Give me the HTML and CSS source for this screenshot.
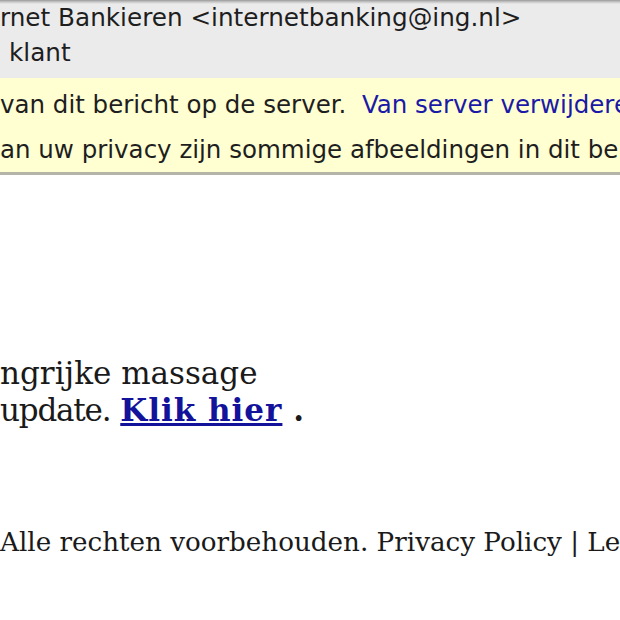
FILE: index.html
```html
<!DOCTYPE html>
<html>
<head>
<meta charset="utf-8">
<link rel="stylesheet" href="styles.css">
</head>
<body>
<div class="window">
  <header class="headers">
    <div class="hline from">rnet Bankieren &lt;internetbanking@ing.nl&gt;</div>
    <div class="hline subject">klant</div>
  </header>
  <section class="notice">
    <div class="nline">van dit bericht op de server.&nbsp; <a class="nlink" href="#">Van server verwijderen</a></div>
    <div class="nline">an uw privacy zijn sommige afbeeldingen in dit bericht geblokkeerd.</div>
  </section>
  <main class="content">
    <p class="msg">ngrijke massage<br><span class="tight">update.</span> <a class="klik" href="#">Klik hier</a> <span class="dot">.</span></p>
    <p class="footer">Alle rechten voorbehouden. Privacy Policy | Legal</p>
  </main>
</div>
</body>
</html>
```
FILE: styles.css
```css
html, body {
  margin: 0;
  padding: 0;
  background: #ffffff;
}
.window {
  width: 620px;
  height: 620px;
  overflow: hidden;
  white-space: nowrap;
}
.headers {
  background: linear-gradient(#9a9a9a 0, #c8c8c8 2px, #ebebeb 4px, #ebebeb 100%);
  height: 78px;
  box-sizing: border-box;
  padding-top: 2px;
  font-family: "DejaVu Sans", sans-serif;
  font-size: 24.7px;
  color: #1e1e1e;
}
.hline {
  height: 35px;
  line-height: 32px;
}
.from { margin-left: 0; }
.subject { margin-left: 9px; }
.notice {
  background: #ffffd2;
  border-bottom: 3px solid #b4b4a8;
  height: 97px;
  box-sizing: border-box;
  padding-top: 11px;
  font-family: "DejaVu Sans", sans-serif;
  font-size: 24.5px;
  color: #1e1e1e;
}
.nline {
  height: 45px;
  line-height: 32px;
}
.nlink {
  color: #1a1aa6;
  text-decoration: none;
}
.content {
  font-family: "DejaVu Serif", serif;
  color: #1a1a1a;
}
.msg {
  margin: 180px 0 0 0;
  font-size: 31px;
  line-height: 37px;
}
.tight {
  letter-spacing: -1.2px;
}
.klik {
  color: #12129a;
  font-weight: bold;
  letter-spacing: 1px;
  text-decoration: underline;
}
.dot {
  font-weight: bold;
  margin-left: 1px;
}
.footer {
  margin: 96px 0 0 0;
  font-size: 26.2px;
  line-height: 34px;
}
```
